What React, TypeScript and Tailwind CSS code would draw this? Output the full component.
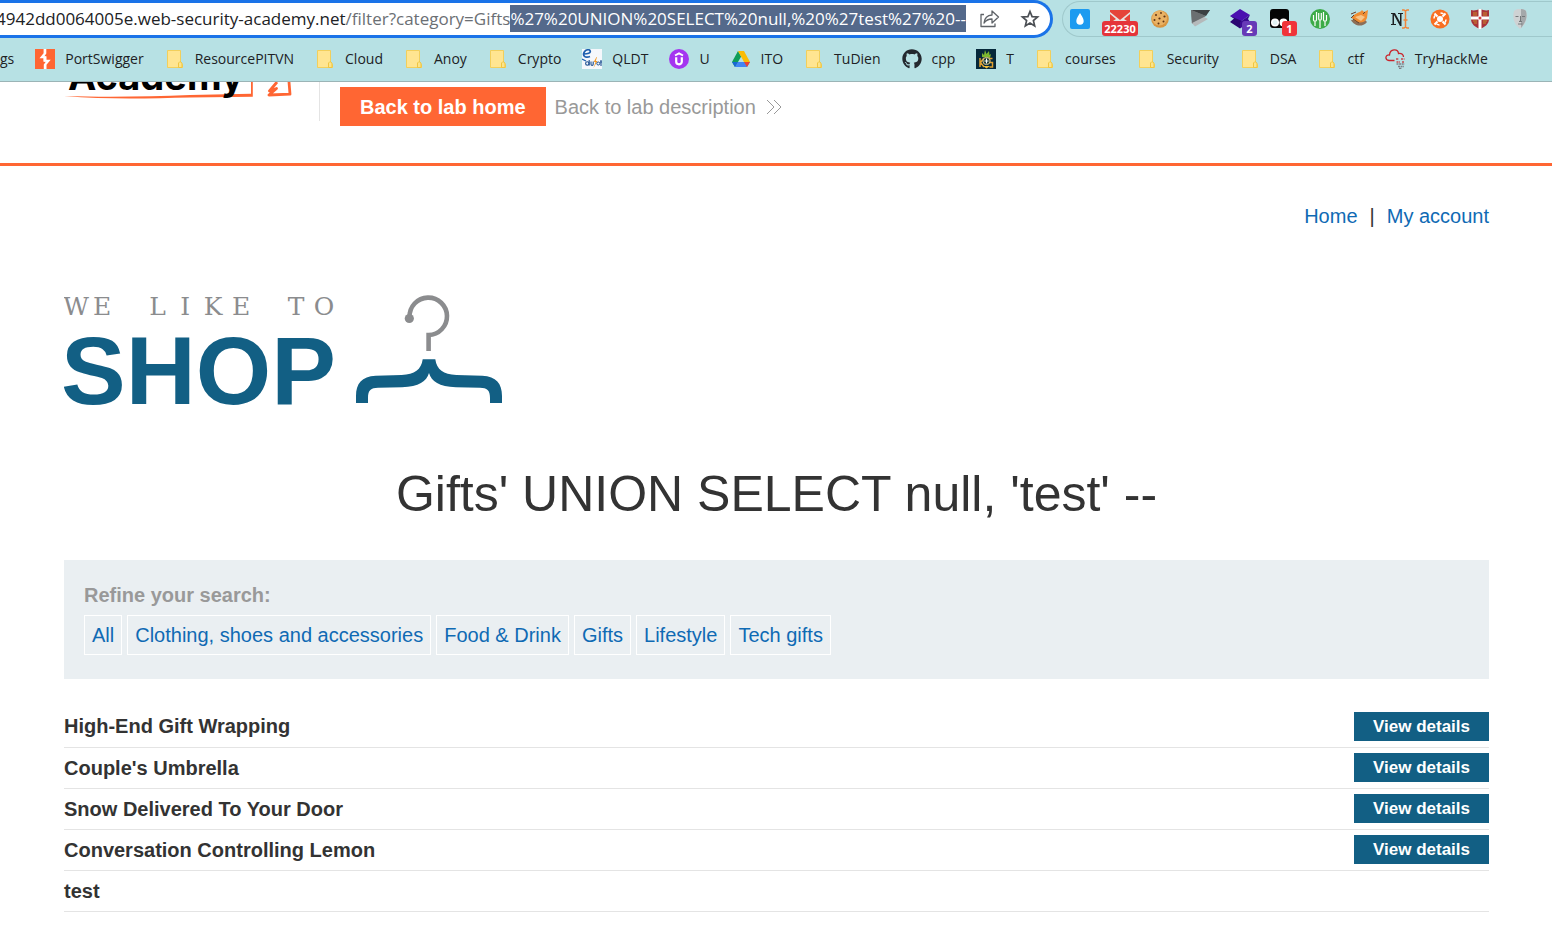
import React from "react";
import { FaGithub } from "react-icons/fa";

type Bookmark = { label: string; icon: React.ReactNode };

function FolderIcon() {
  return (
    <svg viewBox="0 0 20 20" className="size-5 shrink-0" aria-hidden="true">
      <path d="M2.500 1.500h13v12.500l2 1.500v3h-15z" fill="#ffe591" stroke="#f2cf5b" strokeWidth="1" />
      <path d="M13.500 18.500v-4.500l1.500-1.500 2 1.500v4.500z" fill="#fce48a" stroke="#f0c541" strokeWidth="1" />
    </svg>
  );
}

function PortSwiggerIcon() {
  return (
    <svg viewBox="0 0 20 20" className="size-5 shrink-0" aria-hidden="true">
      <rect width="20" height="20" fill="#ff6633" />
      <path d="M11.300 0H8.600v4.200L4.500 9.200h4.100v3.200h2.700V7.300H9.400l1.900-2.700z" fill="#fff" />
      <path d="M8.800 20h2.700v-4.200l4.200-5h-4.400V7.600H8.600v5.100h2.200l-2 2.700z" fill="#fff" />
    </svg>
  );
}

function QldtIcon() {
  return (
    <svg viewBox="0 0 20 20" className="size-5 shrink-0" aria-hidden="true">
      <rect width="20" height="20" fill="#f5f8fc" />
      <path d="M2 5C6 5 8.500 4 8.300 2.300 8 0 4 .2 2.300 3 .2 6.500 3 9.500 8 7.500" fill="none" stroke="#1d5fae" strokeWidth="1.700" />
      <path d="M0 10 4 12" stroke="#1d5fae" strokeWidth="1.200" />
      <circle cx="5.300" cy="14.500" r="1.700" fill="none" stroke="#1d4f91" strokeWidth="1.100" />
      <path d="M7.200 11v5.500M9 12.500v2.700c0 1.500 2.200 1.500 2.200 0v-2.700" fill="none" stroke="#1d4f91" strokeWidth="1.100" />
      <path d="m14.500 8-2.800 5h1.800L11.500 19l4-7h-1.700l1.200-4z" fill="#f59a23" />
      <circle cx="16.300" cy="14.500" r="1.500" fill="none" stroke="#1d4f91" />
      <path d="M19 11v6M18 13h2" stroke="#1d4f91" strokeWidth="1.100" />
    </svg>
  );
}

function UdemyIcon() {
  return (
    <svg viewBox="0 0 20 20" className="size-5 shrink-0" aria-hidden="true">
      <circle cx="10" cy="10" r="10" fill="#a435f0" />
      <path d="M6 6.500 10 4.300l4 2.200" fill="none" stroke="#fff" strokeWidth="1.900" />
      <path d="M7.200 8.300v4.500c0 3.300 5.600 3.300 5.600 0V8.300" fill="none" stroke="#fff" strokeWidth="2.200" />
    </svg>
  );
}

function DriveIcon() {
  return (
    <svg viewBox="0 0 20 20" className="size-5 shrink-0" aria-hidden="true">
      <path d="M7 2 1 13l3 5 6.200-10.500z" fill="#0f9d58" />
      <path d="M7 2h6l6 11h-6z" fill="#fbbc04" />
      <path d="m4 18 3-5h12l-3 5z" fill="#4285f4" />
      <path d="M13 13h6l-3 5z" fill="#ea4335" />
      <path d="m1 13 3 5 3-5z" fill="#1967d2" />
    </svg>
  );
}

function KtsIcon() {
  return (
    <svg viewBox="0 0 20 20" className="size-5 shrink-0" aria-hidden="true">
      <rect width="20" height="20" fill="#06283a" />
      <path d="M6 8V4l2 2 1-5 1.500 4L13 2l.5 4L15 5l-1 4z" fill="#7cb82f" />
      <path d="M4 9v9M8 9l-3.500 4.500L8 18M16.500 9.500h-3v4h3V18h-3" stroke="#e0a030" strokeWidth="1.500" fill="none" />
      <circle cx="10.500" cy="12" r="3.600" fill="#1f3d38" stroke="#d9c58c" />
      <path d="M10.500 9.500v5M8.500 12h4" stroke="#fff" />
      <path d="m7 17 3.500 2.500L14 17z" fill="#f0bd38" />
    </svg>
  );
}

function TryHackMeIcon() {
  return (
    <svg viewBox="0 0 20 20" className="size-5 shrink-0" aria-hidden="true">
      <path d="M9.500 11.500H4C-.5 11 .2 5.500 4.500 6 5-.5 13-.5 13.500 4.500c3.500-.5 5 1.500 5 3.500" fill="none" stroke="#c9252c" strokeWidth="1.300" />
      <path d="M11 10h3m2 0h3.500M11.500 13H15m2 0h2" stroke="#c9454a" strokeWidth="1.400" strokeDasharray="2 .7" />
      <path d="M11.500 15h8M13 17.500h6M14 19.500h3" stroke="#7b7f85" strokeWidth="1.400" strokeDasharray="2 .6" />
    </svg>
  );
}

const bookmarks: Bookmark[] = [
  { label: "PortSwigger", icon: <PortSwiggerIcon /> },
  { label: "ResourcePITVN", icon: <FolderIcon /> },
  { label: "Cloud", icon: <FolderIcon /> },
  { label: "Anoy", icon: <FolderIcon /> },
  { label: "Crypto", icon: <FolderIcon /> },
  { label: "QLDT", icon: <QldtIcon /> },
  { label: "U", icon: <UdemyIcon /> },
  { label: "ITO", icon: <DriveIcon /> },
  { label: "TuDien", icon: <FolderIcon /> },
  { label: "cpp", icon: <FaGithub className="size-5 shrink-0 text-[#24292f]" aria-hidden="true" /> },
  { label: "T", icon: <KtsIcon /> },
  { label: "courses", icon: <FolderIcon /> },
  { label: "Security", icon: <FolderIcon /> },
  { label: "DSA", icon: <FolderIcon /> },
  { label: "ctf", icon: <FolderIcon /> },
  { label: "TryHackMe", icon: <TryHackMeIcon /> },
];

function Extension({ name, badge, badgeClass, children }: { name: string; badge?: string; badgeClass?: string; children: React.ReactNode }) {
  return (
    <button type="button" aria-label={name} className="relative size-5 shrink-0">
      <svg viewBox="0 0 20 20" className="size-5" aria-hidden="true">{children}</svg>
      {badge && (
        <span className={`absolute top-3 rounded-[3px] text-center text-[11px] leading-[15px] font-bold text-white ${badgeClass}`}>
          {badge}
        </span>
      )}
    </button>
  );
}

function Extensions() {
  return (
    <div className="flex h-9 min-w-0 flex-1 items-center gap-5 overflow-hidden rounded-l-full border border-r-0 border-[#9fc8cb] pl-[7px]">
      <Extension name="Droplet">
        <rect width="20" height="20" rx="2" fill="#1d9bf0" />
        <path d="M10 4c1.500 3 3.700 5 3.700 8a3.700 3.700 0 0 1-7.400 0C6.300 9 8.500 7 10 4z" fill="#fff" />
      </Extension>
      <Extension name="Mail" badge="22230" badgeClass="-left-2 w-9 bg-[#e5343a]">
        <path d="M0 1h20v14H0z" fill="#e8e3e1" />
        <path d="M0 1h20v2L10 11 0 3z" fill="#e5443a" />
        <path d="M0 5v9l6-4zM20 5v9l-6-4z" fill="#e5443a" />
      </Extension>
      <Extension name="Cookies">
        <circle cx="10" cy="10" r="8.800" fill="#d9953f" />
        <circle cx="9.500" cy="9" r="7.500" fill="#e9b264" />
        <g fill="#5d3213">
          <circle cx="6" cy="6" r="1" />
          <circle cx="11" cy="4" r=".9" />
          <circle cx="14.500" cy="7.500" r="1.100" />
          <circle cx="9.500" cy="9.500" r="1.100" />
          <circle cx="4.500" cy="11" r="1" />
          <circle cx="13.500" cy="12.500" r="1" />
          <circle cx="8.500" cy="14.500" r="1" />
        </g>
      </Extension>
      <Extension name="Flag">
        <path d="M1 1h19l-5 6-13 8z" fill="#75797b" />
        <path d="M1 1h19l-4 6z" fill="#3c3f41" />
        <path d="m1 13 11-6 6 3-13 7.500z" fill="#b5b9ba" />
        <path d="m1 1 15 6-14 7z" fill="#6b6f71" />
      </Extension>
      <Extension name="Layers" badge="2" badgeClass="left-3 w-[15px] bg-[#673ab7]">
        <path d="m10 0 10 6-10 7L0 7z" fill="#4a0fb0" />
        <path d="m0 7 4 2.500L0 13l10 6.500V15l2-3z" fill="#2a0672" />
        <path d="m10 13 10-7-2 4 2 3-10 6.500z" fill="#390b91" />
      </Extension>
      <Extension name="Script manager" badge="1" badgeClass="left-3 w-[15px] bg-[#f0343a]">
        <rect x="0" y="0" width="19" height="19" rx="3" fill="#050505" />
        <circle cx="5" cy="13.500" r="4" fill="#fff" />
        <circle cx="13.500" cy="13.500" r="4" fill="#fff" />
        <circle cx="5" cy="13.500" r="2.500" fill="#dff1f2" />
      </Extension>
      <Extension name="Forks">
        <circle cx="10" cy="10" r="10" fill="#3cab48" />
        <path d="M3.500 6v5c0 1.500 3 1.500 3 0V3M8.700 4v6c0 1.500 2.600 1.500 2.600 0V4M13.500 3v8c0 1.500 3 1.500 3 0V6M5 12v5M10 11v8M15 12v5" fill="none" stroke="#fff" strokeWidth="1.200" />
      </Extension>
      <Extension name="Fox">
        <path d="M1 11c3 6 11 8 16 2l-3-3z" fill="#8b6f58" />
        <path d="M2 8C6 3 10 4 12 1l2 2 4-2-1 8c-2 6-11 6-15 0z" fill="#ef8d32" />
        <path d="m5 8 6-2 4 2-4 4z" fill="#f8c487" />
        <path d="m1 5 5-2M3 10l6 4M13 5l2-2M1 9l3-3" stroke="#614231" />
      </Extension>
      <Extension name="Notes">
        <path d="M1 4h4l5 9V5H8V4h5v1h-1.500v12H10L4 6v9h2v1H1v-1h1.500V5H1z" fill="#1d2022" />
        <path d="M12 1h2l1.500 1L17 1h2M15.500 2v16M12 19h2l1.500-1 1.500 1h2M13.500 11h4" fill="none" stroke="#f0853a" strokeWidth="1.500" />
      </Extension>
      <Extension name="Orbit">
        <circle cx="10" cy="10" r="9.500" fill="#f96f22" />
        <circle cx="10" cy="10" r="3" fill="#fff" />
        <path d="m4.500 4.500 3 3M15.500 4.500l-3 3M4.500 15.500l3-3M15.500 15.500l-3-3" stroke="#fff" strokeWidth="2" />
        <path d="M10.500 4a6 6 0 0 1 3 1M4 9.500a6 6 0 0 1 1-3M9.500 16a6 6 0 0 1-3-1M16 10.500a6 6 0 0 1-1 3" stroke="#fff" strokeWidth="1.500" fill="none" />
      </Extension>
      <Extension name="Shield">
        <path d="M1 1c3 1 6 0 9-1 3 1 6 2 9 1v9c0 5-4 8-9 10-5-2-9-5-9-10z" fill="#a8343a" />
        <path d="M10 0v20M1 9h18" stroke="#fff" strokeWidth="3" />
        <path d="M3 4h4M3 6h4M13 4h4M13 6h4M3 12h4M4 14h3M13 12h4M13 14h3" stroke="#c98a2c" strokeWidth="1.200" />
        <circle cx="10" cy="9" r="1.500" fill="#d33b42" />
      </Extension>
      <Extension name="Mask">
        <path d="M4 2c3-3 9-3 12 0 1.500 5 .5 10-2 14l-4 4-4-4C3.500 12 2.500 7 4 2z" fill="#cfd2d3" />
        <path d="M11 0c3 0 4 1 5 2 1.500 6 0 11-5 17z" fill="#a4a8aa" />
        <path d="M5.500 7.500h3M12 7.500h3M10.500 7v5l-1.500.5h3M8 15h4.500" stroke="#74787a" fill="none" />
      </Extension>
      <Extension name="More extensions">
        <path d="M12 1h4v4h-4zM12 12h6v4h-6z" fill="#3c4043" />
      </Extension>
    </div>
  );
}

function AddressBar() {
  return (
    <div className="flex h-[38px] w-[1053px] min-w-0 items-center rounded-r-full border-[3px] border-l-0 border-[#1a73e8] bg-white pr-[10px]">
      <div className="flex h-8 min-w-0 flex-1 items-center justify-end overflow-hidden pb-[2px]">
        <div
          role="textbox"
          aria-label="Address"
          contentEditable
          suppressContentEditableWarning
          className="text-[17px] leading-[27px] whitespace-nowrap text-[#202124] outline-none"
        >
          04942dd0064005e.web-security-academy.net
          <span className="text-[#6b6f74]">/filter?category=Gifts</span>
          <span className="inline-block bg-[#54698b] text-white">%27%20UNION%20SELECT%20null,%20%27test%27%20--</span>
        </div>
      </div>
      <button type="button" aria-label="Share this page" className="ml-[14px] size-5">
        <svg viewBox="0 0 20 20" className="size-5" fill="none" stroke="#5f6368" strokeWidth="1.300" strokeLinejoin="round" aria-hidden="true">
          <path d="M4 5.500H1v12h14v-3" />
          <path d="M12 2v4c-5 .3-7.500 3.500-8 8 2-2.800 4.500-4 8-4v4l6.500-6z" />
        </svg>
      </button>
      <button type="button" aria-label="Bookmark this page" className="ml-5 size-5">
        <svg viewBox="0 0 20 20" className="size-5" fill="none" stroke="#4b4f54" strokeWidth="1.700" aria-hidden="true">
          <path d="m10 2.500 2.100 5.100 5.500.4-4.200 3.600 1.300 5.400L10 14.100 5.300 17l1.300-5.400L2.400 8l5.500-.4z" />
        </svg>
      </button>
    </div>
  );
}

function BrowserChrome() {
  return (
    <header className="border-b border-[#9bb4b6] bg-[#b7e1e4] font-['Open_Sans','Noto_Sans',sans-serif] text-[#202124]">
      <div className="flex items-center gap-[9px]">
        <AddressBar />
        <Extensions />
      </div>
      <nav aria-label="Bookmarks" className="pr-16">
        <ul className="flex h-[43px] items-center justify-between pb-[2px] text-sm">
          <li>
            <a href="#bookmarks">gs</a>
          </li>
          {bookmarks.map((b) => (
            <li key={b.label}>
              <a href={`#${b.label}`} className="flex items-center gap-[10px]">
                {b.icon}
                {b.label}
              </a>
            </li>
          ))}
        </ul>
      </nav>
    </header>
  );
}

function AcademyLogo() {
  return (
    <svg viewBox="64 82 236 40" className="h-10 w-[236px]" role="img" aria-label="Academy">
      <path d="M64 96c46 1.500 86 .5 126-1l61-1.300V82h1.800v14.800L190 97.500c-40 .8-80 2.300-126-1.500z" fill="#ff6633" />
      <path d="m277 82-7.500 9 7-2.500-7.500 6.500 21-.8-1-12.200" fill="none" stroke="#ff6633" strokeWidth="2.800" strokeLinejoin="round" />
      <text x="68" y="90" fontSize="38" fontWeight="700" className="font-[Inter,sans-serif]" fill="#000">
        Academy
      </text>
    </svg>
  );
}

function LabHeader() {
  return (
    <section className="flex h-[84px] items-start border-b-[3px] border-[#ff6633] pl-16">
      <AcademyLogo />
      <div className="ml-[19px] h-[39px] border-l border-[#e4e4e4] pt-[5px] pl-5">
        <div className="flex items-center gap-[9px]">
          <a href="#lab-home" className="bg-[#ff6633] px-5 pt-px leading-[38px] font-bold text-white">
            Back to lab home
          </a>
          <a href="#lab-description" className="flex items-center gap-[10px] text-[#999]">
            Back to lab description
            <svg viewBox="0 0 16 16" className="size-4" fill="none" stroke="#999" aria-hidden="true">
              <path d="m1 1 7 7-7 7M8 1l7 7-7 7" />
            </svg>
          </a>
        </div>
      </div>
    </section>
  );
}

function ShopLogo() {
  return (
    <svg viewBox="64 294 440 112" className="h-28 w-[440px]" role="img" aria-label="We like to shop">
      <text
        x="76 102.200 130 157.500 185.300 213 241 269 296 324"
        y="314.500"
        fontSize="25"
        textAnchor="middle"
        fill="#8b8c8e"
        className="font-['DejaVu_Serif',serif]"
      >
        WE LIKE TO
      </text>
      <text x="61" y="403.500" fontSize="97" fontWeight="700" fill="#125f84" className="font-['Liberation_Sans',Arial,sans-serif]">
        SHOP
      </text>
      <path d="M409.600 317a18.700 18.700 0 1 1 19 18v16" fill="none" stroke="#8b8c8e" strokeWidth="4.600" />
      <circle cx="409.300" cy="318.500" r="4.600" fill="#8b8c8e" />
      <path
        d="M422.700 359.300h12.600c1.500 10.500 8 15.200 21 15.700l26 .8c14 .6 19.700 8 19.700 20.200v7h-12v-5c0-8-3-10-10-10.200l-24-.5c-17-.6-24.500-6-27-14.300-2.500 8.300-10 13.700-27 14.300l-24 .5c-7 .2-10 2.200-10 10.200v5h-12v-7c0-12.200 5.700-19.600 19.700-20.200l26-.8c13-.5 19.500-5.200 21-15.700z"
        fill="#125f84"
      />
    </svg>
  );
}

const categories = ["All", "Clothing, shoes and accessories", "Food & Drink", "Gifts", "Lifestyle", "Tech gifts"];

const products = [
  { name: "High-End Gift Wrapping", details: true },
  { name: "Couple's Umbrella", details: true },
  { name: "Snow Delivered To Your Door", details: true },
  { name: "Conversation Controlling Lemon", details: true },
  { name: "test", details: false },
];

export default function App() {
  return (
    <div className="min-h-screen bg-white font-['Liberation_Sans',Arial,sans-serif] text-xl leading-6 text-[#333]">
      <BrowserChrome />
      <LabHeader />
      <main className="pr-[63px] pb-8 pl-16">
        <nav aria-label="Account" className="flex justify-end gap-3 pt-[38px] text-[#0f6ab4]">
          <a href="#home">Home</a>
          <span className="text-[#333]">|</span>
          <a href="#account">My account</a>
        </nav>
        <div className="mt-[66px]">
          <ShopLogo />
        </div>
        <h1 className="mt-[58px] text-center text-[50px] leading-[60px]">Gifts' UNION SELECT null, 'test' --</h1>
        <section className="mt-9 bg-[#eaeff2] px-5 pt-[23px] pb-6">
          <h2 className="font-bold text-[#999]">Refine your search:</h2>
          <div className="mt-2 flex flex-wrap gap-[5px]">
            {categories.map((c) => (
              <a key={c} href={`#${c}`} className="border border-white px-[7px] leading-[38px] text-[#0f6ab4]">
                {c}
              </a>
            ))}
          </div>
        </section>
        <table className="mt-[27px] w-full border-collapse">
          <tbody>
            {products.map((p) => (
              <tr key={p.name} className="border-b border-[#e4e4e4]">
                <th scope="row" className="h-[41px] text-left font-bold">
                  {p.name}
                </th>
                <td className="text-right">
                  {p.details && (
                    <a href={`#${p.name}`} className="inline-block bg-[#125f84] px-[19px] align-middle text-[17px] leading-[29px] font-bold text-white">
                      View details
                    </a>
                  )}
                </td>
              </tr>
            ))}
          </tbody>
        </table>
      </main>
    </div>
  );
}
